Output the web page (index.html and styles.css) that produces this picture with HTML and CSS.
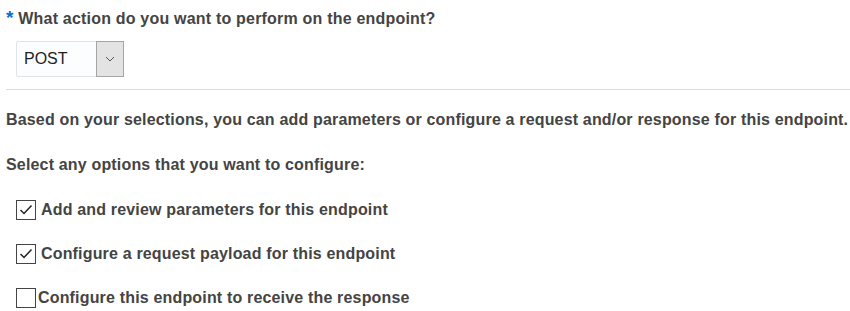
FILE: index.html
```html
<!DOCTYPE html>
<html lang="en">
<head>
  <meta charset="UTF-8">
  <title>Configure Endpoint</title>
  <link rel="stylesheet" href="styles.css">
</head>
<body>
  <div class="form">
    <div class="field">
      <label class="field-label"><span class="required">*</span> What action do you want to perform on the endpoint?</label>
      <div class="select">
        <span class="select-value">POST</span>
        <span class="select-button">
          <svg width="10" height="6" viewBox="0 0 10 6"><path d="M1 1 L5 5 L9 1" fill="none" stroke="#555" stroke-width="1"/></svg>
        </span>
      </div>
    </div>

    <hr class="divider">

    <p class="text">Based on your selections, you can add parameters or configure a request and/or response for this endpoint.</p>
    <p class="text">Select any options that you want to configure:</p>

    <div class="options">
      <label class="option">
        <span class="checkbox checked">
          <svg width="14" height="12" viewBox="0 0 14 12"><path d="M1.5 6 L5 9.5 L12.5 1.5" fill="none" stroke="#222" stroke-width="1.5"/></svg>
        </span>
        Add and review parameters for this endpoint
      </label>
      <label class="option">
        <span class="checkbox checked">
          <svg width="14" height="12" viewBox="0 0 14 12"><path d="M1.5 6 L5 9.5 L12.5 1.5" fill="none" stroke="#222" stroke-width="1.5"/></svg>
        </span>
        Configure a request payload for this endpoint
      </label>
      <label class="option tight">
        <span class="checkbox"></span>
        Configure this endpoint to receive the response
      </label>
    </div>
  </div>
</body>
</html>
```

FILE: styles.css
```css
body {
  margin: 0;
  font-family: "Liberation Sans", Arial, sans-serif;
  font-size: 16px;
  color: #444;
  background-color: #fff;
}

.form {
  padding: 8px 0 0 6px;
}

.field-label {
  display: block;
  font-weight: bold;
  line-height: 20px;
  letter-spacing: 0.2px;
}

.required {
  color: #0572ce;
  font-size: 19px;
}

.select {
  display: flex;
  width: 108px;
  height: 36px;
  margin: 12px 0 0 10px;
  box-sizing: border-box;
  border: 1px solid #dfe4ea;
  border-radius: 2px;
  background-color: #fcfdfe;
}

.select-value {
  flex: 1;
  padding-left: 7px;
  line-height: 34px;
  font-size: 16px;
  color: #222;
}

.select-button {
  display: flex;
  align-items: center;
  justify-content: center;
  width: 26px;
  margin: -1px -1px -1px 0;
  border: 1px solid #a5a5a5;
  background-color: #e3e3e3;
}

.divider {
  border: none;
  border-top: 1px solid #d9dee4;
  margin: 12px 0 0 0;
}

.text {
  margin: 20px 0 0 0;
  font-weight: bold;
  line-height: 20px;
  letter-spacing: 0.17px;
}

.text + .text {
  margin-top: 25px;
}

.options {
  display: flex;
  flex-direction: column;
  gap: 24px;
  margin: 25px 0 0 10px;
}

.option {
  display: flex;
  align-items: center;
  gap: 5px;
  font-weight: bold;
  line-height: 20px;
  letter-spacing: 0.17px;
}

.option.tight {
  gap: 2px;
}

.checkbox {
  display: flex;
  align-items: center;
  justify-content: center;
  width: 20px;
  height: 20px;
  box-sizing: border-box;
  border: 1px solid #444;
  background-color: #fff;
}
```
